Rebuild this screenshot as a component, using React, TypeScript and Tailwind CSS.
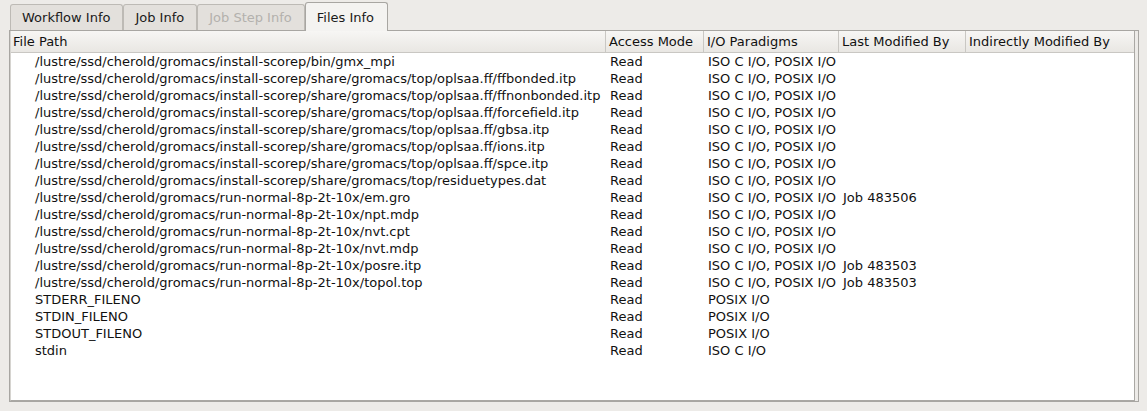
import React from 'react';

type Row = { path: string; mode: string; io: string; last?: string };

const P1 = '/lustre/ssd/cherold/gromacs/install-scorep';
const P2 = '/lustre/ssd/cherold/gromacs/run-normal-8p-2t-10x';
const IO = 'ISO C I/O, POSIX I/O';

const ROWS: Row[] = [
  { path: `${P1}/bin/gmx_mpi`, mode: 'Read', io: IO },
  { path: `${P1}/share/gromacs/top/oplsaa.ff/ffbonded.itp`, mode: 'Read', io: IO },
  { path: `${P1}/share/gromacs/top/oplsaa.ff/ffnonbonded.itp`, mode: 'Read', io: IO },
  { path: `${P1}/share/gromacs/top/oplsaa.ff/forcefield.itp`, mode: 'Read', io: IO },
  { path: `${P1}/share/gromacs/top/oplsaa.ff/gbsa.itp`, mode: 'Read', io: IO },
  { path: `${P1}/share/gromacs/top/oplsaa.ff/ions.itp`, mode: 'Read', io: IO },
  { path: `${P1}/share/gromacs/top/oplsaa.ff/spce.itp`, mode: 'Read', io: IO },
  { path: `${P1}/share/gromacs/top/residuetypes.dat`, mode: 'Read', io: IO },
  { path: `${P2}/em.gro`, mode: 'Read', io: IO, last: 'Job 483506' },
  { path: `${P2}/npt.mdp`, mode: 'Read', io: IO },
  { path: `${P2}/nvt.cpt`, mode: 'Read', io: IO },
  { path: `${P2}/nvt.mdp`, mode: 'Read', io: IO },
  { path: `${P2}/posre.itp`, mode: 'Read', io: IO, last: 'Job 483503' },
  { path: `${P2}/topol.top`, mode: 'Read', io: IO, last: 'Job 483503' },
  { path: 'STDERR_FILENO', mode: 'Read', io: 'POSIX I/O' },
  { path: 'STDIN_FILENO', mode: 'Read', io: 'POSIX I/O' },
  { path: 'STDOUT_FILENO', mode: 'Read', io: 'POSIX I/O' },
  { path: 'stdin', mode: 'Read', io: 'ISO C I/O' },
];

function Tab({ label, active, disabled }: { label: string; active?: boolean; disabled?: boolean }) {
  if (active) {
    return (
      <div className="relative z-10 -mb-px flex h-[29px] items-center rounded-t-[3px] border border-b-0 border-[#a8a6a2] bg-[#f4f3f1] pl-[11px] pr-[13px] text-[#1a1a1a]">
        {label}
      </div>
    );
  }
  return (
    <div
      className={`flex h-[26px] items-center rounded-t-[3px] border border-b-0 border-[#bdbab5] bg-[#e3e0dc] pl-[11px] pr-[12px] ${disabled ? 'text-[#b3b1ad]' : 'text-[#1a1a1a]'}`}
    >
      {label}
    </div>
  );
}

export default function App() {
  return (
    <div
      className="h-[411px] w-[1147px] overflow-hidden bg-[#edebe8] text-[13px] leading-none text-[#111]"
      style={{ fontFamily: '"DejaVu Sans", sans-serif' }}
    >
      <div className="flex items-end pl-[10px] pt-[2px]">
        <Tab label="Workflow Info" />
        <Tab label="Job Info" />
        <Tab label="Job Step Info" disabled />
        <Tab label="Files Info" active />
      </div>

      {/* tab pane */}
      <div className="ml-[9px] flex h-[372px] w-[1130px] flex-col border border-[#a8a6a2] bg-[#edebe8] pr-[3px]">
        <div className="flex flex-1 flex-col border-b border-r border-[#aaa8a4] border-l border-l-[#d6d4d0] bg-white">
          {/* header */}
          <div className="flex h-[22px] border-b border-[#c9c7c3] bg-gradient-to-b from-[#f7f6f4] to-[#e9e7e3]">
            <div className="flex w-[595px] items-center border-r border-[#c9c7c3] pl-[2px]">File Path</div>
            <div className="flex w-[98px] items-center border-r border-[#c9c7c3] pl-[3px]">Access Mode</div>
            <div className="flex w-[135px] items-center border-r border-[#c9c7c3] pl-[3px]">I/O Paradigms</div>
            <div className="flex w-[127px] items-center border-r border-[#c9c7c3] pl-[3px]">Last Modified By</div>
            <div className="flex flex-1 items-center pl-[3px]">Indirectly Modified By</div>
          </div>
          {/* rows */}
          <div className="flex flex-col">
            {ROWS.map((r) => (
              <div key={r.path} className="flex h-[17px] items-center whitespace-nowrap">
                <div className="w-[596px] pl-[24px]">{r.path}</div>
                <div className="w-[98px] pl-[3px]">{r.mode}</div>
                <div className="w-[135px] pl-[3px]">{r.io}</div>
                <div className="w-[127px] pl-[3px]">{r.last ?? ''}</div>
                <div className="flex-1" />
              </div>
            ))}
          </div>
        </div>
      </div>
    </div>
  );
}
